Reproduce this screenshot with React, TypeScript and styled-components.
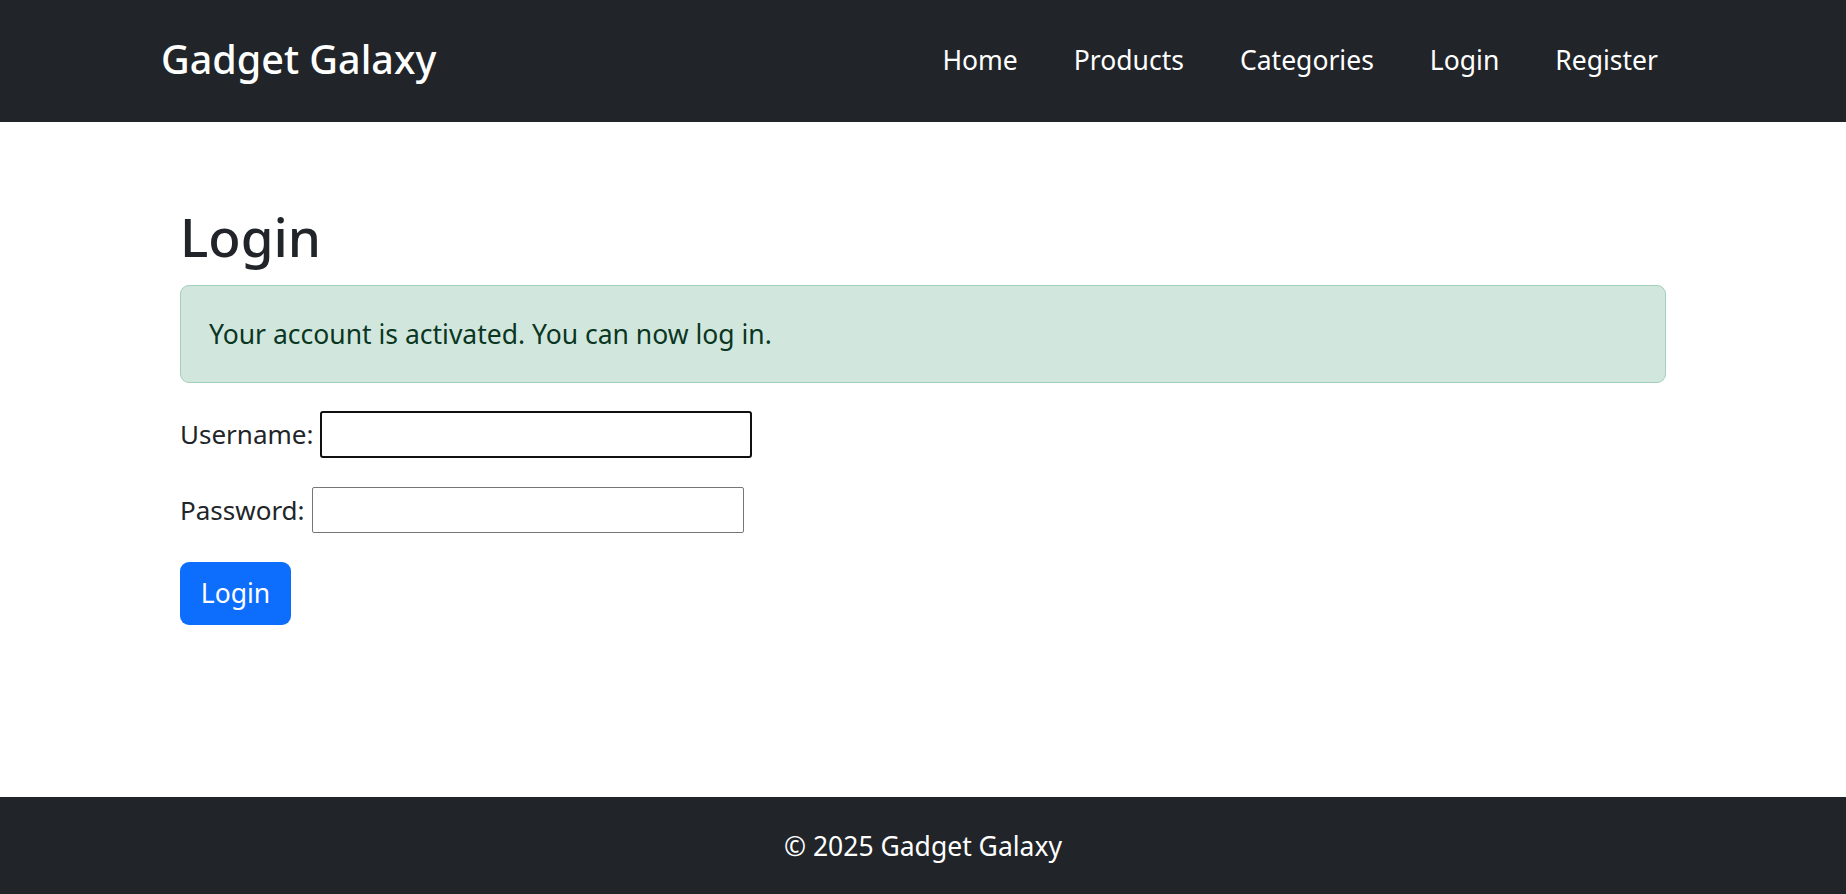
import React from "react";
import styled, { createGlobalStyle } from "styled-components";

const GlobalStyle = createGlobalStyle`
  html, body {
    margin: 0;
    padding: 0;
  }
  body {
    font-family: "Noto Sans", "DejaVu Sans", sans-serif;
    color: #212529;
    background: #fff;
  }
  * {
    box-sizing: border-box;
  }
`;

const Page = styled.div`
  display: flex;
  flex-direction: column;
  min-height: 100vh;
`;

const NavBar = styled.nav`
  background: #212529;
  height: 122px;
  display: flex;
  align-items: center;
  justify-content: space-between;
  padding: 0 160px 3px 161px;
`;

const Brand = styled.a`
  color: #fff;
  font-size: 39.5px;
  font-weight: 500;
  text-decoration: none;
  line-height: 1;
`;

const NavList = styled.ul`
  display: flex;
  list-style: none;
  margin: 0;
  padding: 0;
`;

const NavLink = styled.a`
  display: block;
  color: #fff;
  font-size: 26.5px;
  padding: 8px 28px;
  text-decoration: none;
`;

const Main = styled.main`
  flex: 1;
  padding: 83px 180px 40px;
`;

const Title = styled.h1`
  margin: 0;
  font-size: 53px;
  font-weight: 500;
  line-height: 1.2;
`;

const Alert = styled.div`
  margin-top: 16px;
  height: 98px;
  display: flex;
  align-items: center;
  padding: 0 28px;
  background: #d1e7dd;
  border: 1px solid #a3cfbb;
  border-radius: 9px;
  color: #0a3622;
  font-size: 26.5px;
`;

const Form = styled.form`
  display: flex;
  flex-direction: column;
  align-items: flex-start;
`;

const Row = styled.div<{ $top: number }>`
  display: flex;
  align-items: center;
  gap: 7px;
  margin-top: ${(p) => p.$top}px;
`;

const Label = styled.label`
  font-size: 26px;
`;

const Input = styled.input<{ $focused?: boolean }>`
  width: 432px;
  height: ${(p) => (p.$focused ? 47 : 46)}px;
  font-size: 24px;
  padding: 0 4px;
  background: #fff;
  border: ${(p) => (p.$focused ? "2px solid #101010" : "1px solid #767676")};
  border-radius: ${(p) => (p.$focused ? 3 : 2)}px;
  outline: none;
  &:focus {
    outline: none;
  }
`;

const Button = styled.button`
  margin-top: 29px;
  width: 111px;
  height: 63px;
  background: #0d6efd;
  color: #fff;
  border: none;
  border-radius: 9px;
  font-family: inherit;
  font-size: 26.5px;
  cursor: pointer;
`;

const Footer = styled.footer`
  background: #212529;
  height: 97px;
  display: flex;
  align-items: center;
  justify-content: center;
  color: #fff;
  font-size: 26.5px;
`;

const links = ["Home", "Products", "Categories", "Login", "Register"];

export default function App() {
  return (
    <>
      <GlobalStyle />
      <Page>
        <NavBar>
          <Brand href="#">Gadget Galaxy</Brand>
          <NavList>
            {links.map((l) => (
              <li key={l}>
                <NavLink href="#">{l}</NavLink>
              </li>
            ))}
          </NavList>
        </NavBar>
        <Main>
          <Title>Login</Title>
          <Alert>Your account is activated. You can now log in.</Alert>
          <Form onSubmit={(e) => e.preventDefault()}>
            <Row $top={28}>
              <Label htmlFor="username">Username:</Label>
              <Input id="username" type="text" $focused autoFocus />
            </Row>
            <Row $top={29}>
              <Label htmlFor="password">Password:</Label>
              <Input id="password" type="password" />
            </Row>
            <Button type="submit">Login</Button>
          </Form>
        </Main>
        <Footer>© 2025 Gadget Galaxy</Footer>
      </Page>
    </>
  );
}
